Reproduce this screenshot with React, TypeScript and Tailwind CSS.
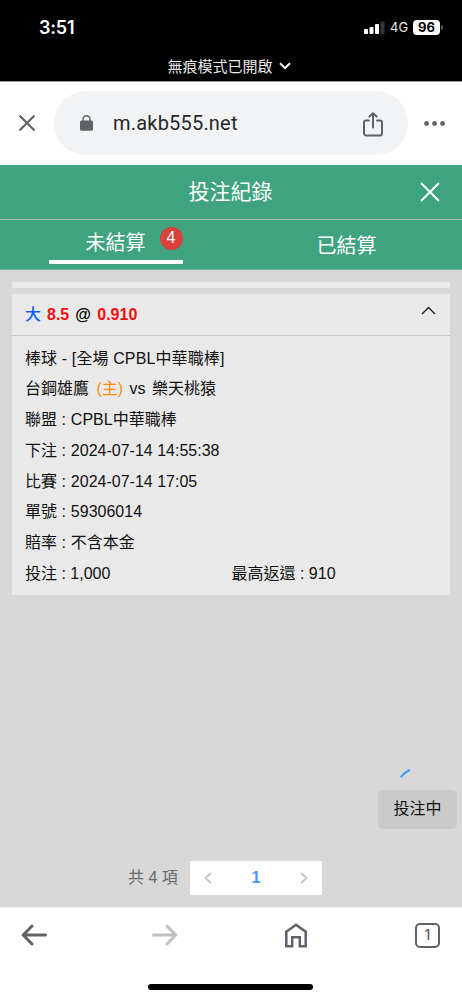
import React, { useState } from 'react';

function StatusBar() {
  return (
    <header className="h-[81px] bg-black text-white">
      <div className="flex h-[55px] items-center justify-between pl-[39px] pr-[19px]">
        <span className="font-[Inter,sans-serif] text-[18px] font-semibold leading-none tracking-[-0.2px]">3:51</span>
        <div className="flex items-center">
          <svg className="h-[13px] w-[21px]" viewBox="0 0 21 13">
            <rect x="0" y="8" width="4" height="5" rx="1" fill="#fff" />
            <rect x="5.5" y="6" width="4" height="7" rx="1" fill="#fff" />
            <rect x="11" y="3" width="4" height="10" rx="1" fill="#fff" />
            <rect x="16.5" y="0.5" width="4" height="12.5" rx="1" fill="#333" />
          </svg>
          <span className="ml-[5px] w-[18px] font-[Inter,sans-serif] text-[13px] leading-none text-[#e8e8e8]">4G</span>
          <span className="ml-[5px] flex h-[15px] w-[27px] items-center justify-center rounded-[4px] bg-white font-[Inter,sans-serif] text-[13px] font-bold leading-none text-black">
            96
          </span>
          <span className="ml-px h-[5px] w-[2px] rounded-r-full bg-[#555]" />
        </div>
      </div>
      <div className="flex h-[22px] items-center justify-center gap-[6px] pr-[4px]">
        <span className="text-[15px] leading-none text-[#e9e9e9]">無痕模式已開啟</span>
        <svg className="h-[8px] w-[12px]" viewBox="0 0 12 8" fill="none" stroke="#fff" strokeWidth="2">
          <path d="M1 1.2l5 5 5-5" />
        </svg>
      </div>
    </header>
  );
}

function AddressBar() {
  return (
    <div className="flex h-[84px] items-center border-t border-[#9c9c9c] bg-white pb-px pl-[19px] pr-[16px]">
      <svg className="h-[16px] w-[16px]" viewBox="0 0 16 16" fill="none" stroke="#5f6368" strokeWidth="2.2" strokeLinecap="round">
        <path d="M1.2 1.2l13.6 13.6M14.8 1.2L1.2 14.8" />
      </svg>
      <div className="ml-[19px] flex h-[64px] w-[354px] items-center rounded-full bg-[#f1f3f5] pl-[26px] pr-[25px]">
        <svg className="h-[16px] w-[13px]" viewBox="0 0 13 16" fill="none">
          <rect x="0" y="5.5" width="13" height="10.3" rx="1.6" fill="#5f6368" />
          <path d="M3 6V4.2a3.5 3.5 0 017 0V6" stroke="#5f6368" strokeWidth="1.5" />
        </svg>
        <span className="ml-[20px] flex-1 whitespace-nowrap font-[Roboto,sans-serif] text-[20px] leading-none tracking-[0.2px] text-[#26282b]">
          m.akb555.net
        </span>
        <svg className="mt-[2px] h-[25px] w-[20px]" viewBox="0 0 20 25" fill="none" stroke="#5f6368" strokeWidth="2" strokeLinecap="round" strokeLinejoin="round">
          <path d="M6 8.6H3A2 2 0 001 10.6v10.6a2.4 2.4 0 002.4 2.4h13.2a2.4 2.4 0 002.4-2.4V10.6a2 2 0 00-2-2h-3" />
          <path d="M10 15.4V1.2M6.4 4.6L10 1.2l3.6 3.4" />
        </svg>
      </div>
      <svg className="ml-[16px] h-[5px] w-[21px]" viewBox="0 0 21 5" fill="#5f6368">
        <circle cx="2.5" cy="2.5" r="2.4" />
        <circle cx="10.5" cy="2.5" r="2.4" />
        <circle cx="18.5" cy="2.5" r="2.4" />
      </svg>
    </div>
  );
}

function BetCard() {
  const details = [
    { label: '聯盟', value: 'CPBL中華職棒' },
    { label: '下注', value: '2024-07-14 14:55:38' },
    { label: '比賽', value: '2024-07-14 17:05' },
    { label: '單號', value: '59306014' },
    { label: '賠率', value: '不含本金' },
  ];

  return (
    <article className="mt-[6px] h-[301px] bg-[#e9e9e9] text-base text-[#111]">
      <div className="flex h-[42px] items-center justify-between border-b border-[#c6c6c6] pl-[13px] pr-[14px] font-bold">
        <div className="flex items-center gap-[6px] leading-none">
          <span className="font-medium text-[#0a60ff]">大</span>
          <span className="text-[#f80b0b]">8.5</span>
          <span className="w-[16px] text-black">@</span>
          <span className="text-[#f80b0b]">0.910</span>
        </div>
        <svg className="mb-[8px] h-[9px] w-[15px]" viewBox="0 0 15 9" fill="none" stroke="#222" strokeWidth="1.4">
          <path d="M1 8l6.5-6.5L14 8" />
        </svg>
      </div>
      <div className="flex flex-col pl-[13px] pt-[7.5px]">
        <p className="h-[30.8px] leading-[30.8px] tracking-[0.12px]">棒球 - [全場 CPBL中華職棒]</p>
        <p className="h-[30.8px] leading-[30.8px]">
          台鋼雄鷹 <span className="ml-[3px] mr-[2px] text-[#ff8c0a]">(主)</span> vs <span className="ml-[2px]">樂天桃猿</span>
        </p>
        {details.map((row) => (
          <p key={row.label} className="h-[30.8px] leading-[30.8px]">
            {row.label} : <span className="ml-[0.5px]">{row.value}</span>
          </p>
        ))}
        <div className="flex h-[30.8px] leading-[30.8px]">
          <span className="w-[206.5px]">投注 : 1,000</span>
          <span>最高返還 : 910</span>
        </div>
      </div>
    </article>
  );
}

function Pagination() {
  return (
    <div className="flex h-[34px] items-center pl-[116px]">
      <span className="w-[62px] whitespace-nowrap text-base leading-none text-[#68696d]">共 4 項</span>
      <div className="flex h-[34px] w-[132px] items-center justify-between bg-white px-[14px]">
        <svg className="h-[12px] w-[8px]" viewBox="0 0 8 12" fill="none" stroke="#bfc2c9" strokeWidth="1.7">
          <path d="M7 1L1.5 6 7 11" />
        </svg>
        <span className="text-base font-bold leading-none text-[#409eff]">1</span>
        <svg className="h-[12px] w-[8px]" viewBox="0 0 8 12" fill="none" stroke="#bfc2c9" strokeWidth="1.7">
          <path d="M1 1l5.5 5L1 11" />
        </svg>
      </div>
    </div>
  );
}

function BottomBar() {
  return (
    <footer className="flex h-[93px] flex-col items-center border-t border-[#ececec] bg-white">
      <div className="flex h-[54px] w-full items-center justify-between pl-[21px] pr-[22px]">
        <svg className="h-[22px] w-[26px]" viewBox="0 0 26 22" fill="none" stroke="#5f6368" strokeWidth="3" strokeLinecap="round" strokeLinejoin="round">
          <path d="M24.5 11H2.2M11 2L2.2 11l8.8 9" />
        </svg>
        <svg className="-ml-[3px] h-[22px] w-[26px]" viewBox="0 0 26 22" fill="none" stroke="#bdc1c6" strokeWidth="3" strokeLinecap="round" strokeLinejoin="round">
          <path d="M1.5 11h22.3M15 2l8.8 9-8.8 9" />
        </svg>
        <svg className="-ml-px h-[25px] w-[22px]" viewBox="0 0 22 25" fill="none" stroke="#5f6368" strokeWidth="2.5">
          <path d="M1.3 8.7L11 1.8l9.7 6.9v14.5h-5.9v-8.9H7.2v8.9H1.3z" />
        </svg>
        <div className="flex h-[25px] w-[25px] items-center justify-center rounded-[5px] border-2 border-[#5f6368] font-[Inter,sans-serif] text-[14px] font-medium leading-none text-[#5f6368]">
          1
        </div>
      </div>
      <div className="mr-px mt-[22px] h-[6px] w-[165px] rounded-full bg-black" />
    </footer>
  );
}

export default function App() {
  const [tab, setTab] = useState('open');

  return (
    <div className="relative flex h-[1000px] w-[462px] flex-col overflow-hidden bg-[#d8d8d8] font-['Liberation_Sans','Noto_Sans_CJK_TC',sans-serif]">
      <StatusBar />
      <AddressBar />

      <div className="flex h-[55px] items-center justify-between border-b border-[#a5bdb2] bg-[#40a380] pb-px pl-[41px] pr-[22px] text-white">
        <h1 className="flex-1 text-center text-[21px] leading-none">投注紀錄</h1>
        <svg className="h-[20px] w-[20px]" viewBox="0 0 20 20" fill="none" stroke="#fff" strokeWidth="2">
          <path d="M1 1l18 18M19 1L1 19" />
        </svg>
      </div>

      <nav className="flex h-[50px] border-b border-[#6fae97] bg-[#40a380] text-[20px] text-white">
        <button onClick={() => setTab('open')} className="flex w-1/2 justify-center">
          <span className={`flex h-[44px] w-[134px] items-center justify-end border-b-4 ${tab === 'open' ? 'border-white' : 'border-transparent'}`}>
            <span className="mt-[5px] leading-none">未結算</span>
            <span className="mb-[4px] ml-[14px] flex h-[23px] w-[23px] items-center justify-center rounded-full bg-[#d9413b] text-[16px] leading-none">
              4
            </span>
          </span>
        </button>
        <button onClick={() => setTab('settled')} className="flex w-1/2 justify-center">
          <span className={`flex h-[50px] w-[134px] items-center justify-center pt-px leading-none ${tab === 'settled' ? 'border-b-4 border-white' : ''}`}>
            已結算
          </span>
        </button>
      </nav>

      <main className="flex flex-1 flex-col justify-between p-[12px]">
        <section>
          <div className="h-[6px] bg-[#e9e9e9]" />
          <BetCard />
        </section>
        <Pagination />
      </main>

      <BottomBar />

      {/* floating bet-in-progress badge */}
      <div className="absolute right-[5px] top-[768px] flex w-[79px] flex-col">
        <svg className="ml-[22px] h-[10px] w-[11px]" viewBox="0 0 11 10" fill="none" stroke="#409eff" strokeWidth="2.2" strokeLinecap="round">
          <path d="M1.4 8.4Q4 4.8 9.2 2.2" />
        </svg>
        <div className="mt-[12px] flex h-[39px] items-center justify-center rounded-[5px] bg-[#cacaca] pb-px text-base leading-none text-[#111]">
          投注中
        </div>
      </div>
    </div>
  );
}
